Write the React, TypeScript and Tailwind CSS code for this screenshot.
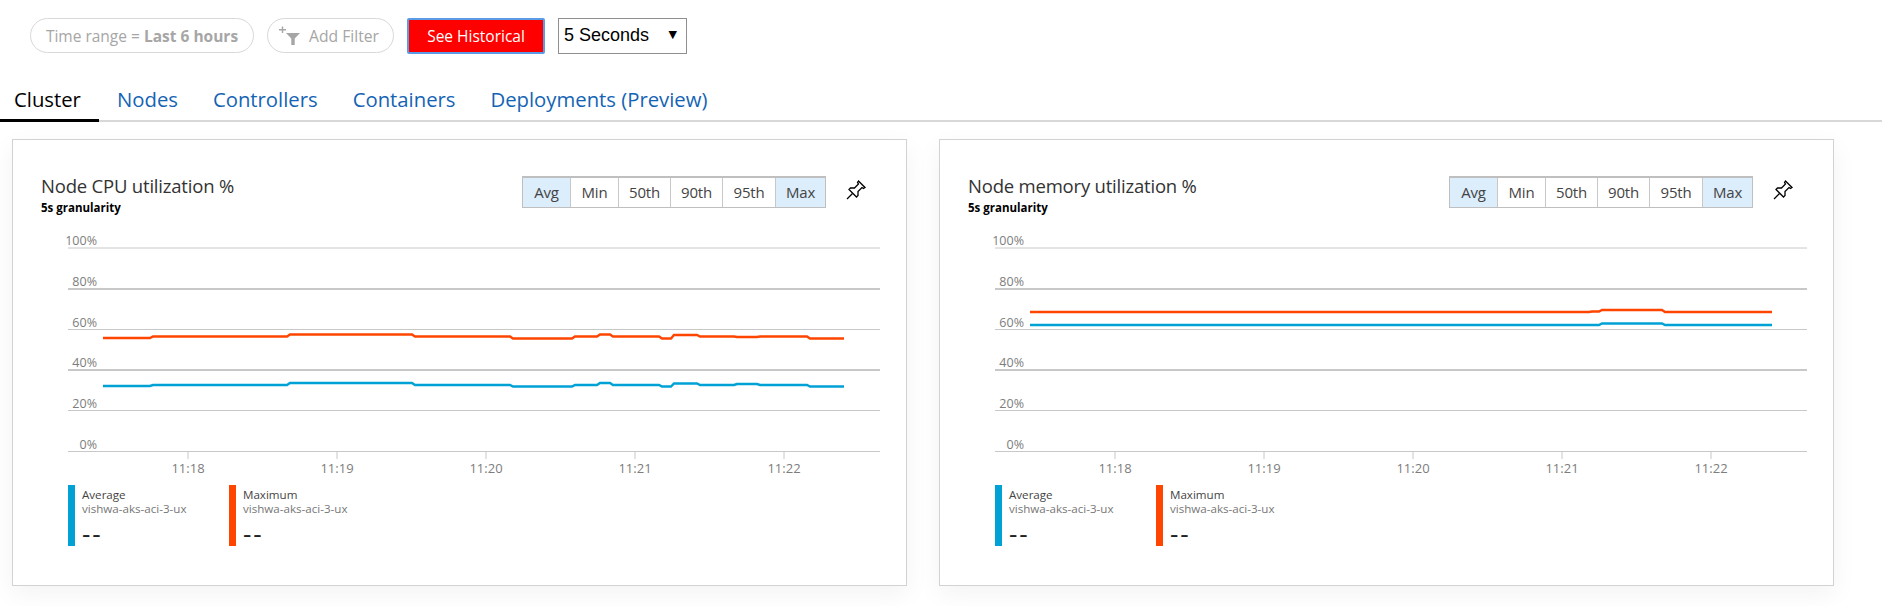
import React from 'react';

const uiFont = "font-['Open_Sans','Noto_Sans',sans-serif]";

const tabs = ['Cluster', 'Nodes', 'Controllers', 'Containers', 'Deployments (Preview)'];
const aggs = [
  { label: 'Avg', width: 'w-[47px]', on: true },
  { label: 'Min', width: 'w-[48px]', on: false },
  { label: '50th', width: 'w-[52px]', on: false },
  { label: '90th', width: 'w-[52px]', on: false },
  { label: '95th', width: 'w-[53px]', on: false },
  { label: 'Max', width: 'w-[50px]', on: true },
];

// chart coordinates are relative to the svg, [x end of segment, y]
const cpuMax: [number, number][] = [[103, 338], [153, 336.5], [290, 334.5], [415, 336.5], [513, 338.5], [575, 336.5], [600, 334.5], [613, 336.5], [662, 338.5], [674, 335], [700, 336.5], [737, 337], [760, 336.5], [810, 338.5], [844, 338.5]];
const cpuAvg: [number, number][] = [[103, 386], [153, 385], [290, 383], [415, 385], [513, 386.5], [575, 385], [600, 383], [613, 385], [662, 386.5], [674, 383.5], [700, 385], [737, 384], [760, 385], [810, 386.5], [844, 386.5]];
const memMax: [number, number][] = [[103, 312], [665, 311.5], [675, 310], [738, 312], [845, 312]];
const memAvg: [number, number][] = [[103, 325], [665, 325], [675, 323.5], [738, 325], [845, 325]];

function stepPath(points: [number, number][]) {
  let d = `M${points[0][0]} ${points[0][1]}`;
  for (let i = 1; i < points.length; i++) {
    const [x] = points[i];
    const y = points[i - 1][1];
    const next = points[i][1];
    d += ` L${x - 3} ${y} L${x} ${next}`;
  }
  return d;
}

function Chart({ max, avg }: { max: [number, number][]; avg: [number, number][] }) {
  const grid = [
    { label: '100%', y: 248, w: 1 },
    { label: '80%', y: 289, w: 2 },
    { label: '60%', y: 329.5, w: 1 },
    { label: '40%', y: 370, w: 2 },
    { label: '20%', y: 410.5, w: 1 },
    { label: '0%', y: 451.5, w: 1 },
  ];
  const ticks = [
    { label: '11:18', x: 188 },
    { label: '11:19', x: 337 },
    { label: '11:20', x: 486 },
    { label: '11:21', x: 635 },
    { label: '11:22', x: 784 },
  ];
  return (
    <svg width="893" height="255" viewBox="0 225 893 255" className="block">
      {grid.map(g => (
        <g key={g.label}>
          <line x1="55" x2="867" y1={g.y} y2={g.y} stroke="#c8c8c8" strokeWidth={g.w} />
          <text x="84" y={g.y - 3} textAnchor="end" fontSize="12.5" fill="#7d7d7d">{g.label}</text>
        </g>
      ))}
      {ticks.map(t => (
        <g key={t.label}>
          <line x1={t.x - 13} x2={t.x - 13} y1="452" y2="459" stroke="#c8c8c8" />
          <text x={t.x - 13} y="473" textAnchor="middle" fontSize="13" fill="#7d7d7d">{t.label}</text>
        </g>
      ))}
      <path d={stepPath(max.map(([x, y]) => [x - 13, y]))} fill="none" stroke="#ff4500" strokeWidth="2.4" />
      <path d={stepPath(avg.map(([x, y]) => [x - 13, y]))} fill="none" stroke="#00a2d6" strokeWidth="2.4" />
    </svg>
  );
}

function Legend({ title, color }: { title: string; color: string }) {
  return (
    <div className="flex w-[161px] h-[61px]">
      <div className={`w-[7px] h-full ${color}`} />
      <div className="ml-[7px] flex flex-col">
        <span className="text-[11.6px] leading-[14px] mt-[3px] text-[#444]">{title}</span>
        <span className="text-[11.6px] leading-[14px] text-[#777]">vishwa-aks-aci-3-ux</span>
        <span className="text-[26px] leading-[28px] tracking-[2px] text-[#222] mt-[3px]">--</span>
      </div>
    </div>
  );
}

function PinIcon() {
  return (
    <svg width="24" height="24" viewBox="0 0 24 24" fill="none" stroke="#000" strokeWidth="1.3" strokeLinejoin="miter">
      <path d="M14.5 3 L21 9.5 L19.5 10.5 L18 9.5 L14 13.5 L14 17.5 L12.5 19 L5 11.5 L6.5 10 L10.5 10 L14.5 6 L13.5 4.5 Z" />
      <path d="M8.5 15.5 L3 21" />
    </svg>
  );
}

function Card({ title, max, avg }: { title: string; max: [number, number][]; avg: [number, number][] }) {
  return (
    <div className="w-[895px] h-[447px] border border-[#d2d2d2] bg-white shadow-[0_8px_24px_rgba(0,0,0,0.05)]">
      <div className="flex justify-between pl-[28px] pr-[38px] pt-[32px] h-[85px]">
        <div>
          <div className="text-[18.5px] leading-[28px] text-[#333] tracking-[-0.2px]">{title}</div>
          <div className="text-[11.5px] leading-[16px] font-bold text-black">5s granularity</div>
        </div>
        <div className="flex pt-[4px]">
          <div className="flex h-[32px] border border-[#bfbfbf] border-t-2">
            {aggs.map((a, i) => (
              <div
                key={a.label}
                className={`${a.width} flex items-center justify-center pb-[1px] text-[15px] tracking-[-0.2px] text-[#444] ${i > 0 ? 'border-l border-[#c8c8c8]' : ''} ${a.on ? 'bg-[#dcedfc]' : 'bg-white'}`}
              >
                {a.label}
              </div>
            ))}
          </div>
          <div className="ml-[18px] mt-[2px]"><PinIcon /></div>
        </div>
      </div>
      <Chart max={max} avg={avg} />
      <div className="flex pl-[55px] pt-[5px]">
        <Legend title="Average" color="bg-[#00a2d6]" />
        <Legend title="Maximum" color="bg-[#ff4500]" />
      </div>
    </div>
  );
}

export default function App() {
  return (
    <div className={`w-[1882px] h-[606px] bg-white overflow-hidden ${uiFont}`}>
      <div className="flex items-center h-[71px] pl-[30px]">
        <div className="flex items-center h-[35px] w-[224px] justify-center pt-[2px] rounded-full border border-[#d8d8d8] text-[15.5px] text-[#a6a6a6]">
          <span>Time range = <b className="font-bold">Last 6 hours</b></span>
        </div>
        <div className="flex items-center h-[35px] w-[127px] ml-[13px] pl-[10px] rounded-full border border-[#d8d8d8] text-[15.7px] text-[#a6a6a6]">
          <svg width="24" height="20" viewBox="0 0 24 20" fill="#a6a6a6">
            <path d="M1 3.1h2.8V0.5h1.4v2.6h2.8v1.4H5.2v2.6H3.8V4.5H1z" />
            <path d="M8 7h14l-5.3 5.5V19h-3.400v-6.500z" />
          </svg>
          <span className="ml-[7px] pt-[2px]">Add Filter</span>
        </div>
        <button className="ml-[13px] h-[36px] w-[138px] pt-[2px] bg-[#ff0000] border-2 border-[#5a9be6] rounded-[2px] text-white text-[15.5px]">See Historical</button>
        <div className="relative ml-[13px]">
          <select className="appearance-none w-[129px] h-[36px] pl-[5px] bg-white border border-[#8f8f8f] text-[18px] text-black font-['Liberation_Sans',sans-serif]">
            <option>5 Seconds</option>
          </select>
          <span className="absolute right-[10px] top-[9px] text-[11px] text-black font-['DejaVu_Sans',sans-serif] pointer-events-none">▼</span>
        </div>
      </div>
      <div className="flex h-[51px] border-b-2 border-[#d8d8d8]">
        {tabs.map((t, i) => (
          <div
            key={t}
            className={`flex items-center h-[51px] pt-[8px] text-[20.3px] border-b-[3px] ${i === 0 ? 'w-[99px] pl-[14px] text-black border-black' : 'mr-[35px] text-[#1464b4] border-transparent'} ${i === 1 ? 'ml-[18px]' : ''}`}
          >
            {t}
          </div>
        ))}
      </div>
      <div className="flex gap-[32px] pl-[12px] pt-[17px]">
        <Card title="Node CPU utilization %" max={cpuMax} avg={cpuAvg} />
        <Card title="Node memory utilization %" max={memMax} avg={memAvg} />
      </div>
    </div>
  );
}
